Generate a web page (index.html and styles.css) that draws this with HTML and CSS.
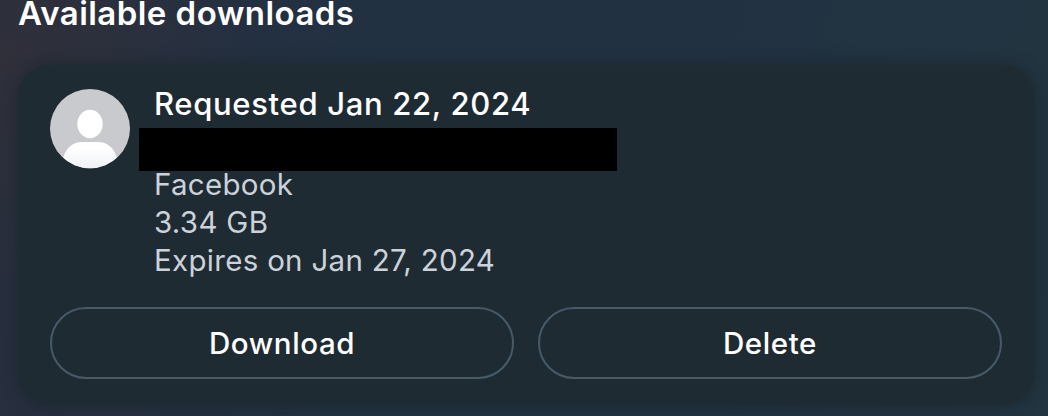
FILE: index.html
```html
<!DOCTYPE html>
<html lang="en">
<head>
    <meta charset="UTF-8">
    <meta name="viewport" content="width=device-width, initial-scale=1.0">
    <title>Available downloads</title>
    <link rel="stylesheet" href="styles.css">
</head>
<body>
    <div class="page">
        <h2 class="heading">Available downloads</h2>
        <div class="card">
            <div class="info">
                <!-- Default avatar -->
                <svg class="avatar" viewBox="0 0 80 80">
                    <defs>
                        <clipPath id="circle"><ellipse cx="40" cy="39.6" rx="40" ry="39.6"/></clipPath>
                        <linearGradient id="shade" x1="0" y1="0" x2="0" y2="1">
                            <stop offset="0.2" stop-color="#ffffff"/>
                            <stop offset="1" stop-color="#eff1f4"/>
                        </linearGradient>
                    </defs>
                    <g clip-path="url(#circle)">
                        <rect width="80" height="80" fill="#c9cace"/>
                        <ellipse cx="40" cy="35" rx="12.7" ry="14.2" fill="#fff"/>
                        <path d="M12 74C14 60 22 53 32 53H48C58 53 66 60 68 74V80H12Z" fill="url(#shade)"/>
                    </g>
                </svg>
                <div class="details">
                    <h3 class="title">Requested Jan 22, 2024</h3>
                    <div class="redacted"></div>
                    <p class="source">Facebook</p>
                    <p class="size">3.34 GB</p>
                    <p class="expires">Expires on Jan 27, 2024</p>
                </div>
            </div>
            <div class="actions">
                <button class="btn">Download</button>
                <button class="btn">Delete</button>
            </div>
        </div>
    </div>
</body>
</html>
```

FILE: styles.css
```css
* {
    box-sizing: border-box;
}

body {
    margin: 0;
    height: 416px;
    overflow: hidden;
    background:
        radial-gradient(ellipse 240px 240px at 0 60px, #2f303a, rgba(47, 48, 58, 0) 100%),
        linear-gradient(100deg, #292e3e 0%, #213142 35%, #213142 65%, #223540 100%);
    font-family: Inter, "Noto Sans", sans-serif;
    color: #fff;
}

.page {
    padding: 0 14px 0 18px;
}

.heading {
    margin: 0;
    height: 65px;
    font-size: 33px;
    font-weight: 600;
    line-height: 26px;
    letter-spacing: 0.45px;
    white-space: nowrap;
}

.card {
    height: 340px;
    padding: 20px 32px 26px;
    border-radius: 32px;
    background: #1f2b33;
    box-shadow: 0 0 16px rgba(28, 38, 47, 0.9);
}

.info {
    display: flex;
    gap: 24px;
    height: 222px;
}

.avatar {
    width: 80px;
    height: 80px;
    margin-top: 4px;
    flex-shrink: 0;
}

.title {
    margin: 0;
    height: 43px;
    font-size: 31px;
    font-weight: 500;
    line-height: 38px;
    letter-spacing: 0.67px;
}

/* Covers the account name */
.redacted {
    width: 478px;
    height: 43px;
    margin: 0 0 -6px -15px;
    background: #000;
}

.details p {
    margin: 0;
    font-size: 29.5px;
    line-height: 38px;
    letter-spacing: 0.3px;
    color: #ccd2da;
}

.actions {
    display: flex;
    gap: 24px;
}

.btn {
    flex: 1;
    height: 72px;
    padding: 0 0 1px;
    border: 2px solid #465a69;
    border-radius: 36px;
    background: transparent;
    color: #fff;
    font-family: inherit;
    font-size: 29.5px;
    font-weight: 500;
    letter-spacing: 0.6px;
    cursor: pointer;
}
```
